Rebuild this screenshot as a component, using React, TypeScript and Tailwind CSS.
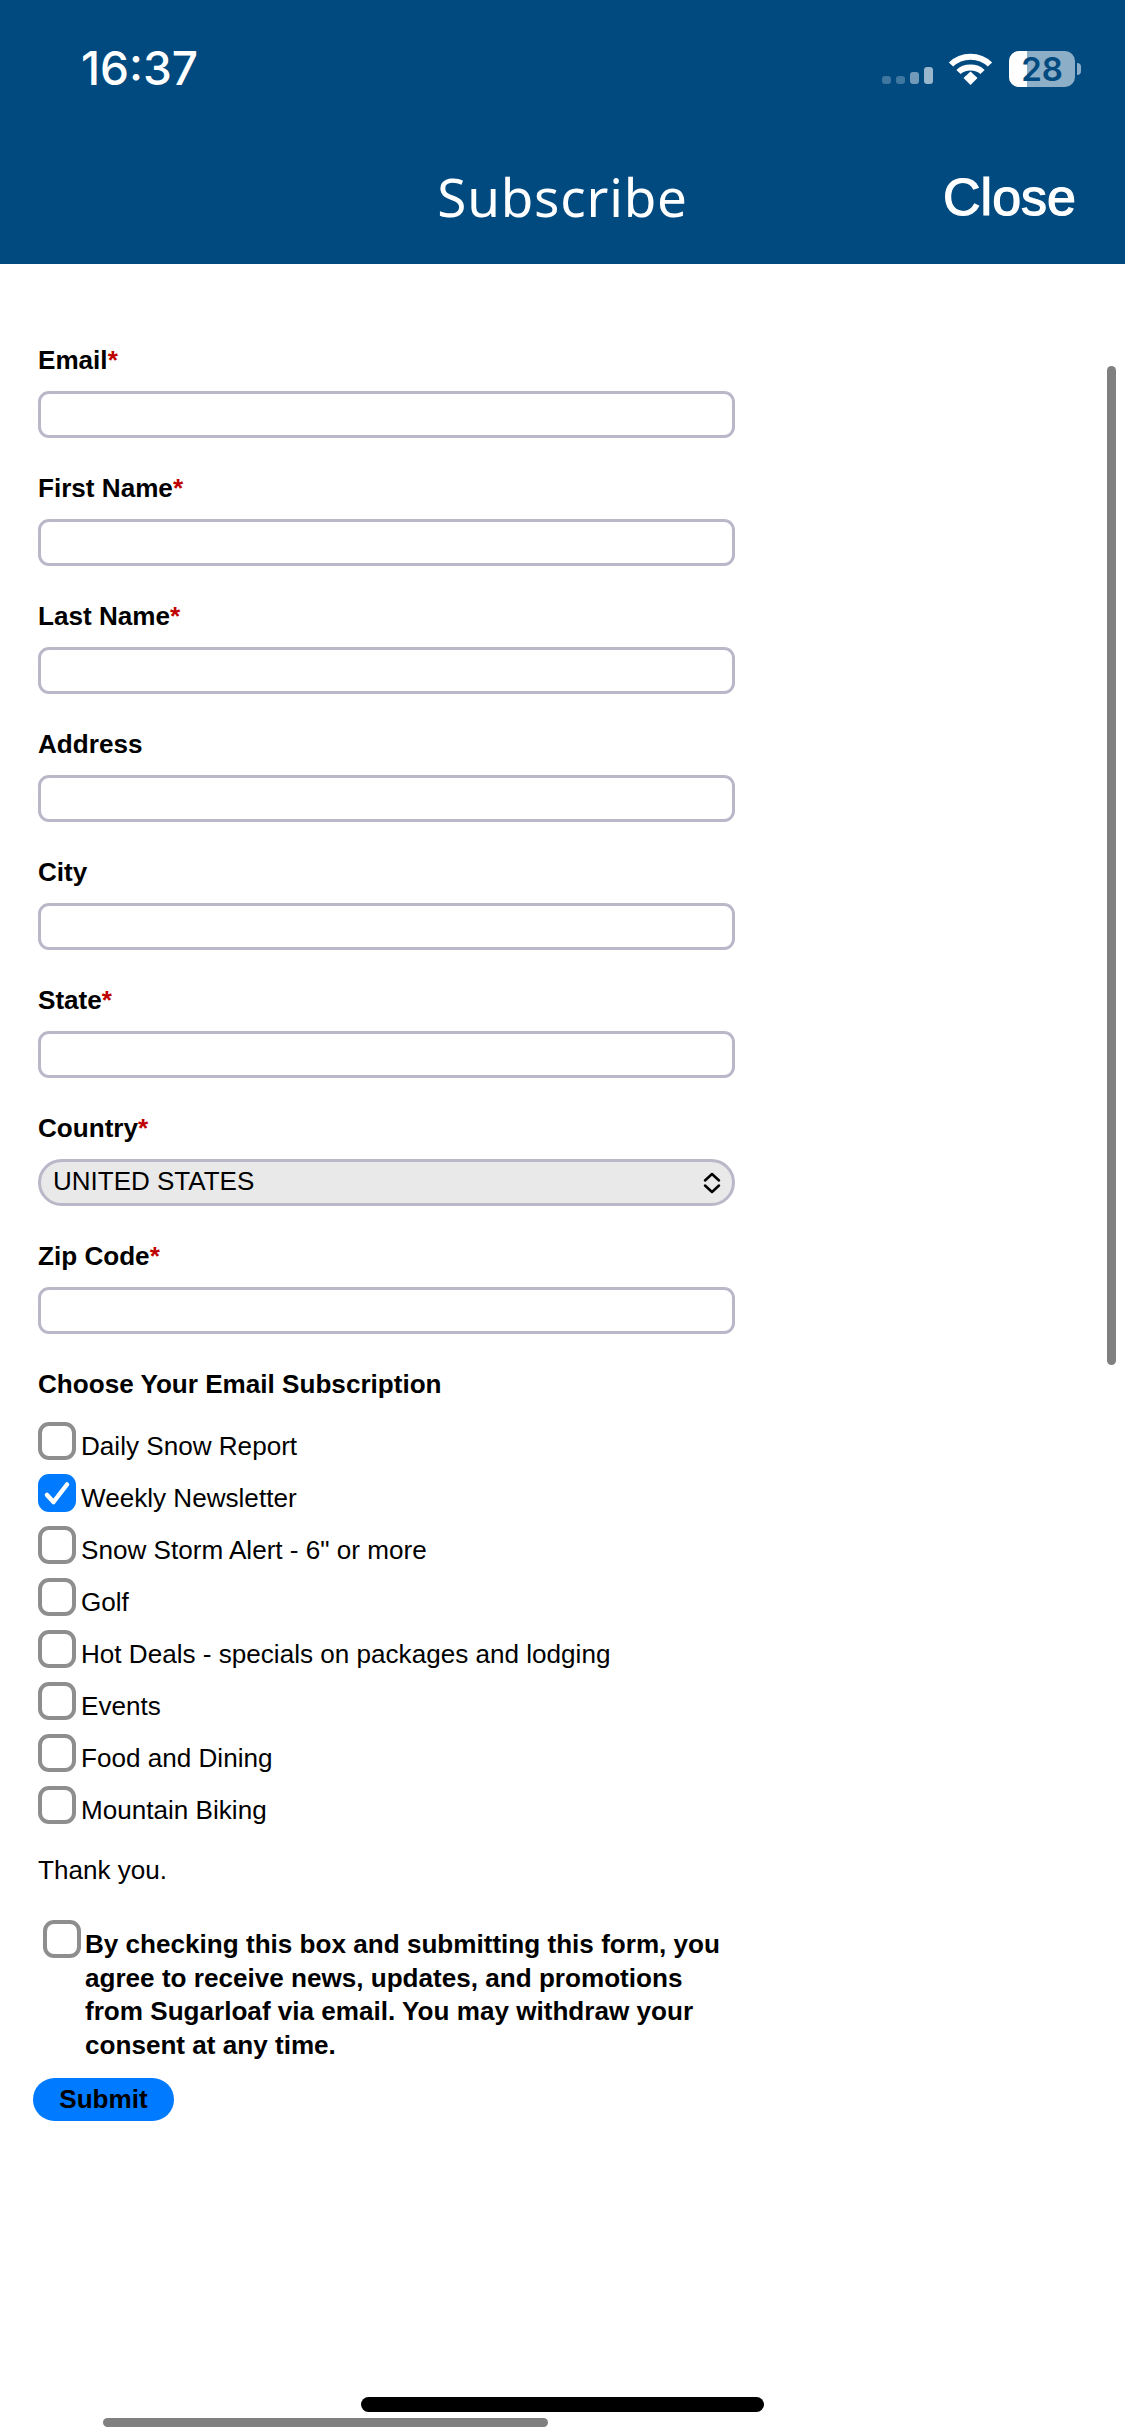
import React from 'react';

const sans = 'font-["Liberation_Sans",Arial,sans-serif]';

const Field: React.FC<{ label: string; required?: boolean; children?: React.ReactNode }> = ({ label, required, children }) => (
  <div className="mb-[33px]">
    <label className="block h-[33px] mb-[15px] text-[26.1px] leading-[34px] font-bold text-black">
      {label}
      {required && <span className="text-[#c00000]">*</span>}
    </label>
    {children || (
      <input
        type="text"
        className="block w-[697px] h-[47px] rounded-[11px] border-[3px] border-[#b9b7c8] bg-white outline-none"
      />
    )}
  </div>
);

const Checkbox: React.FC<{ checked?: boolean }> = ({ checked }) =>
  checked ? (
    <span className="shrink-0 w-[38px] h-[38px] rounded-[11px] bg-[#007aff]">
      <svg width="38" height="38" viewBox="0 0 38 38" fill="none">
        <path d="M9 21L15.5 28L29 10.5" stroke="white" strokeWidth="4.5" strokeLinecap="round" strokeLinejoin="round" />
      </svg>
    </span>
  ) : (
    <span className="shrink-0 w-[38px] h-[38px] rounded-[11px] border-[4px] border-[#8e8e8e] bg-white" />
  );

const options = [
  { label: 'Daily Snow Report' },
  { label: 'Weekly Newsletter', checked: true },
  { label: 'Snow Storm Alert - 6" or more' },
  { label: 'Golf' },
  { label: 'Hot Deals - specials on packages and lodging' },
  { label: 'Events' },
  { label: 'Food and Dining' },
  { label: 'Mountain Biking' },
];

const StatusBar = () => (
  <div className="h-[132px] pl-[81px] pr-[44px] pt-[42px] flex justify-between items-start">
    <span className='font-["Inter",sans-serif] text-[46px] leading-[52px] font-medium text-white'>16:37</span>
    <div className="flex items-start mt-[9px]">
      <div className="flex items-end gap-[5px] h-[33px] mr-[15px]">
        <span className="w-[9px] h-[8px] rounded-[3px] bg-white/25" />
        <span className="w-[9px] h-[8px] rounded-[3px] bg-white/25" />
        <span className="w-[9px] h-[12px] rounded-[3px] bg-white/45" />
        <span className="w-[9px] h-[17px] rounded-[3px] bg-white/60" />
      </div>
      <svg width="45" height="32" viewBox="0 0 45 32" fill="none" className="mr-[16px] mt-[2px]">
        <path d="M3 11.5C13.5 1 31.5 1 42 11.5" stroke="white" strokeWidth="6" />
        <path d="M10.5 19C16.5 13 28.5 13 34.5 19" stroke="white" strokeWidth="6" />
        <path d="M15.5 25L22.5 18.5L29.5 25L22.5 32Z" fill="white" />
      </svg>
      <div className="relative w-[66px] h-[36px] rounded-[10px] bg-white/55 flex items-center justify-center">
        <span className="absolute left-0 top-0 h-full w-[18px] rounded-l-[10px] bg-white" />
        <span className='relative font-["Inter",sans-serif] text-[33px] leading-[36px] font-semibold text-[#004a80]'>28</span>
      </div>
      <span className="w-[4px] h-[12px] mt-[12px] ml-[2px] rounded-r-[4px] bg-white/55" />
    </div>
  </div>
);

export default function App() {
  return (
    <div className={`relative w-[1125px] h-[2436px] overflow-hidden bg-white ${sans}`}>
      {/* Header */}
      <div className="h-[264px] bg-[#004a80]">
        <StatusBar />
        <div className="relative mt-[32px] flex justify-center">
          <span className='font-["Noto_Sans",sans-serif] text-[53px] leading-[66px] tracking-[0.8px] text-white'>Subscribe</span>
          <span className="absolute right-[49px] top-0 text-[52px] leading-[66px] font-medium text-white [-webkit-text-stroke:1.2px_white]">Close</span>
        </div>
      </div>

      {/* Form */}
      <div className="pl-[38px] pt-[79px]">
        <Field label="Email" required />
        <Field label="First Name" required />
        <Field label="Last Name" required />
        <Field label="Address" />
        <Field label="City" />
        <Field label="State" required />
        <Field label="Country" required>
          <div className="relative w-[697px] h-[47px]">
            <select className="block w-full h-full appearance-none rounded-[24px] border-[3px] border-[#b9b7c8] bg-[#e9e9ea] pl-[12px] pb-[4px] text-[26px] text-black outline-none">
              <option>UNITED STATES</option>
            </select>
            <svg width="18" height="22" viewBox="0 0 18 22" fill="none" className="absolute right-[14px] top-[13px]">
              <path d="M2 8.5L9 2L16 8.5M2 13.5L9 20L16 13.5" stroke="black" strokeWidth="2.5" strokeLinecap="round" strokeLinejoin="round" />
            </svg>
          </div>
        </Field>
        <Field label="Zip Code" required />

        <div className="h-[32px] mt-[2px] mb-[23px] text-[26.1px] leading-[34px] font-bold text-black">Choose Your Email Subscription</div>
        <div className="flex flex-col gap-[14px]">
          {options.map((o) => (
            <div key={o.label} className="flex items-start gap-[5px] h-[38px]">
              <Checkbox checked={o.checked} />
              <span className="mt-[5px] text-[26.1px] leading-[38px] text-black whitespace-nowrap">{o.label}</span>
            </div>
          ))}
        </div>

        <div className="mt-[27px] text-[26.1px] leading-[38px] text-black">Thank you.</div>

        <div className="flex items-start ml-[5px] mt-[31px] gap-[4px] w-[690px]">
          <Checkbox />
          <p className="mt-[8px] text-[26.1px] leading-[33.5px] font-bold text-black">
            By checking this box and submitting this form, you agree to receive news, updates, and promotions from Sugarloaf via email. You may withdraw your consent at any time.
          </p>
        </div>

        <button className="block -ml-[5px] mt-[16px] w-[141px] h-[43px] rounded-[22px] bg-[#007aff] text-[26.1px] leading-[41px] font-bold text-black">
          Submit
        </button>
      </div>

      {/* Scroll indicators and home bar sit over the page */}
      <div className="absolute left-[1107px] top-[366px] w-[9px] h-[999px] rounded-full bg-[#808080]" />
      <div className="absolute left-[361px] top-[2397px] w-[403px] h-[15px] rounded-full bg-black" />
      <div className="absolute left-[103px] top-[2418px] w-[445px] h-[9px] rounded-full bg-[#808080]" />
    </div>
  );
}
